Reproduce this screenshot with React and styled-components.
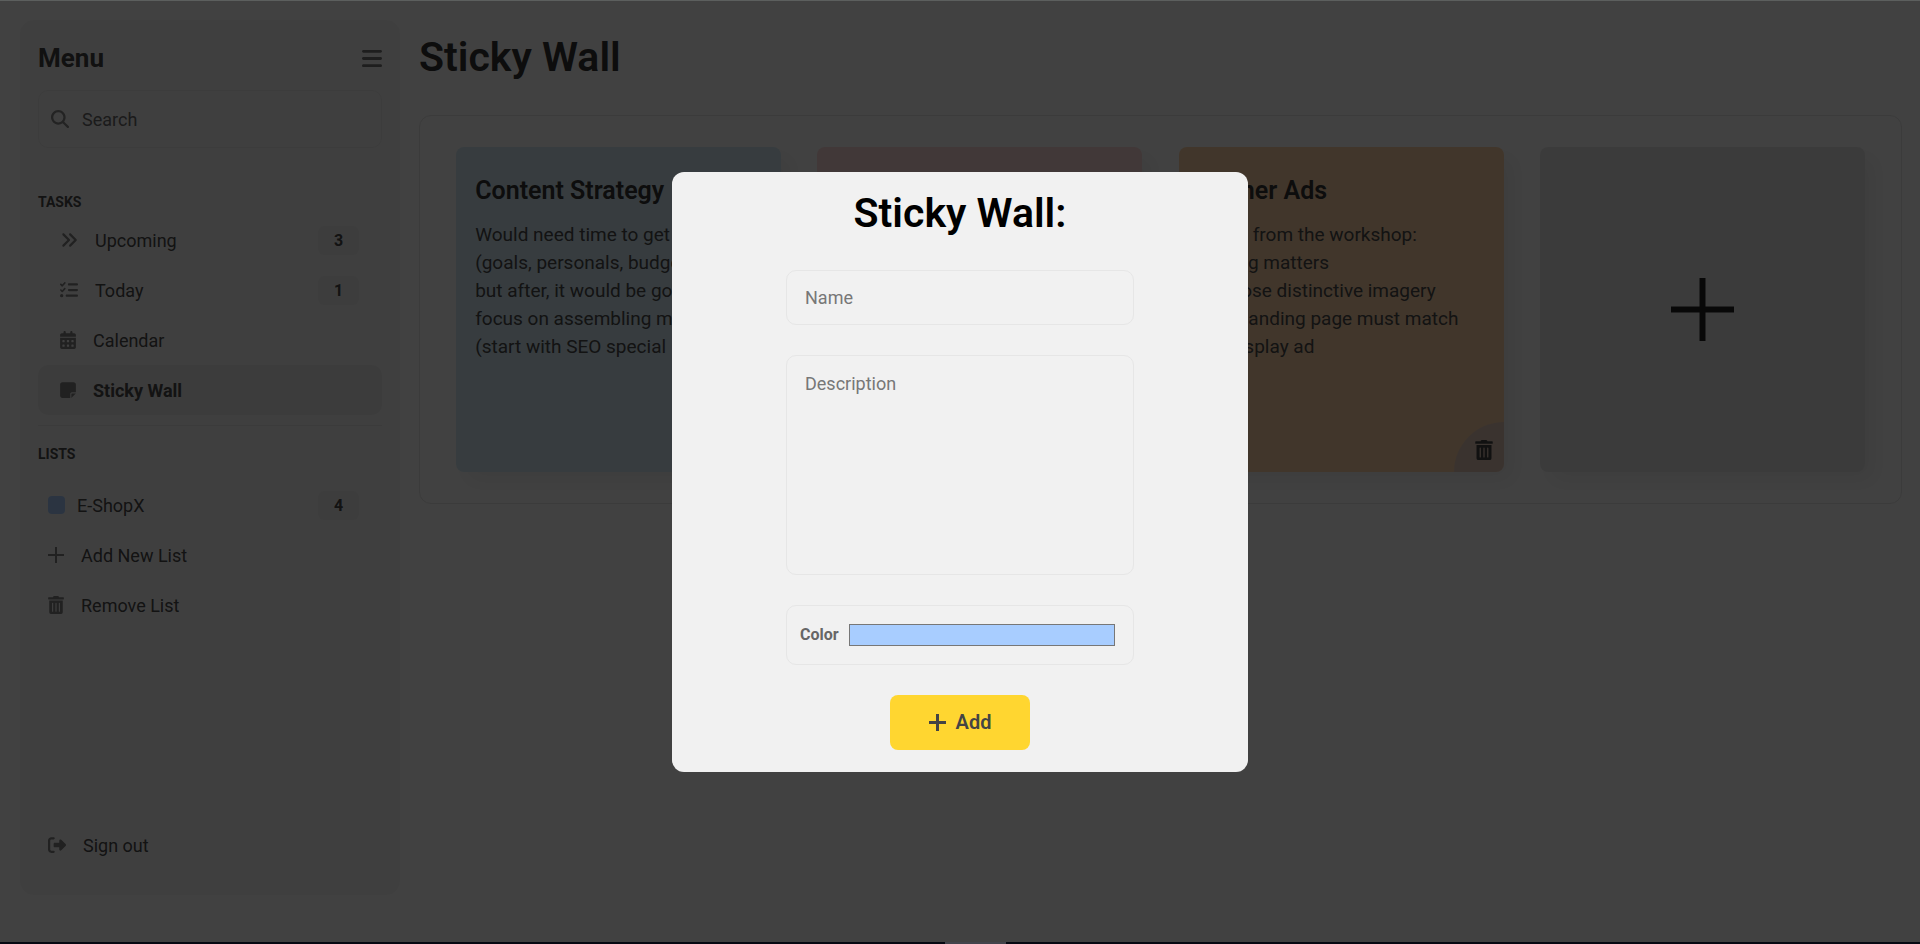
import React from 'react';
import styled, { createGlobalStyle } from 'styled-components';
import {
  FaAnglesRight,
  FaListCheck,
  FaCalendarDays,
  FaNoteSticky,
  FaMagnifyingGlass,
  FaRightFromBracket,
  FaBars,
} from 'react-icons/fa6';
import { FaTrashAlt } from 'react-icons/fa';

const GlobalStyle = createGlobalStyle`
  *, *::before, *::after { box-sizing: border-box; }
  body { margin: 0; background: #fff; }
  body, button, input, textarea { font-family: Roboto, "Liberation Sans", sans-serif; }
`;

const Frame = styled.div`
  min-height: 100vh;
  display: flex;
  flex-direction: column;
`;

const TopEdge = styled.div`
  height: 1px;
  background: #5c5f5e;
`;

const BottomEdge = styled.div`
  height: 2px;
  display: flex;
  justify-content: center;
  padding-left: 30px;
  background: #060912;
`;

const EdgeMark = styled.span`
  width: 61px;
  background: #43444c;
`;

const Stage = styled.div`
  position: relative;
  flex: 1;
  display: flex;
  gap: 19px;
  padding: 19px 18px 47px 20px;
`;

const Sidebar = styled.aside`
  flex: none;
  width: 380px;
  display: flex;
  flex-direction: column;
  padding: 21px 18px 25px;
  border-radius: 14px;
  background: #f8f8f8;
  color: #4a4a4a;
`;

const SideHead = styled.header`
  display: flex;
  align-items: center;
  justify-content: space-between;
  margin-bottom: 15px;
`;

const SideTitle = styled.h2`
  margin: 0;
  font-size: 26px;
  line-height: 34px;
  font-weight: 700;
  color: #444;
`;

const IconButton = styled.button`
  display: flex;
  padding: 0;
  border: 0;
  background: none;
  color: #777;
  svg {
    width: 20px;
    height: 23px;
  }
`;

const SearchBox = styled.label`
  display: flex;
  align-items: center;
  gap: 13px;
  height: 58px;
  padding: 0 12px;
  border: 1px solid #ebebeb;
  border-radius: 10px;
  color: #888;
`;

const SearchInput = styled.input`
  flex: 1;
  min-width: 0;
  padding: 0;
  border: 0;
  outline: 0;
  background: none;
  font-size: 18px;
  &::placeholder { color: #6a6a6a; opacity: 1; }
`;

const Caption = styled.h3`
  margin: ${(p) => (p.$first ? '41px 0 0' : '0 0 13px')};
  font-size: 14px;
  line-height: 26px;
  font-weight: 700;
`;

const Rule = styled.hr`
  width: 100%;
  margin: 10px 0 15px;
  border: 0;
  border-top: 1px solid #e6e6e6;
`;

const NavList = styled.ul`
  margin: 0;
  padding: 0;
  list-style: none;
`;

const NavLink = styled.a`
  display: flex;
  align-items: center;
  gap: ${(p) => (p.$tight ? '12px' : '17px')};
  height: 50px;
  padding: 0 23px 0 ${(p) => (p.$inset ? '22px' : '10px')};
  border-radius: 10px;
  background: ${(p) => (p.$active ? '#ebebeb' : 'none')};
  color: #4a4a4a;
  font-size: 18px;
  font-weight: ${(p) => (p.$active ? 700 : 400)};
  text-decoration: none;
  svg {
    flex: none;
    width: ${(p) => (p.$narrow ? '16px' : '18px')};
    height: 18px;
    color: #808080;
  }
`;

const NavText = styled.span`
  flex: 1;
`;

const Badge = styled.span`
  width: 41px;
  border-radius: 6px;
  background: #efefef;
  font-size: 16px;
  line-height: 29px;
  font-weight: 700;
  text-align: center;
`;

const Swatch = styled.span`
  width: 17px;
  height: 18px;
  border-radius: 4px;
  background: #a8cdff;
`;

const SignOut = styled.div`
  margin-top: auto;
`;

const Main = styled.main`
  flex: 1;
  min-width: 0;
`;

const PageTitle = styled.h1`
  margin: 10px 0 31px;
  font-size: 41px;
  line-height: 54px;
  font-weight: 600;
  color: #333;
`;

const Wall = styled.section`
  display: flex;
  flex-wrap: wrap;
  justify-content: space-evenly;
  gap: 30px 0;
  padding: 31px 0;
  border: 1px solid #e6e6e6;
  border-radius: 12px;
`;

const Note = styled.article`
  position: relative;
  width: 325px;
  height: 325px;
  padding: 29px 19px;
  overflow: hidden;
  border-radius: 8px;
  background: ${(p) => p.$color};
`;

const NoteShell = styled.div`
  border-radius: 8px;
  box-shadow: 10px 10px 20px rgba(0, 0, 0, 0.06);
`;

const NoteTitle = styled.h2`
  margin: 0 0 15px;
  font-size: 25px;
  line-height: 30px;
  font-weight: 600;
  color: #333;
`;

const NoteText = styled.p`
  margin: 0;
  font-size: 19px;
  line-height: 28px;
  white-space: pre;
  color: #4a4a4a;
`;

const DeleteNote = styled.button`
  position: absolute;
  right: 0;
  bottom: 0;
  width: 50px;
  height: 50px;
  display: flex;
  align-items: center;
  justify-content: center;
  padding: 6px 0 0 11px;
  border: 0;
  border-radius: 50px 0 0 0;
  background: rgba(180, 180, 210, 0.36);
  color: #444;
`;

const AddNote = styled.button`
  width: 325px;
  height: 325px;
  display: flex;
  align-items: center;
  justify-content: center;
  padding: 0;
  border: 0;
  border-radius: 8px;
  background: #e8e8e8;
  color: #222;
  box-shadow: 10px 10px 20px rgba(0, 0, 0, 0.06);
`;

const Overlay = styled.div`
  position: absolute;
  inset: 0;
  display: flex;
  align-items: center;
  justify-content: center;
  background: rgba(0, 0, 0, 0.745);
`;

const Dialog = styled.div`
  width: 30%;
  min-width: 400px;
  padding: 14px 20px 22px;
  border-radius: 12px;
  background: #f1f1f1;
`;

const DialogTitle = styled.h1`
  margin: 0 0 30px;
  font-size: 41px;
  line-height: 54px;
  font-weight: 600;
  text-align: center;
  color: #000;
`;

const Form = styled.form`
  display: flex;
  flex-direction: column;
  align-items: center;
  gap: 30px;
  width: 348px;
  margin: 0 auto;
`;

const NameField = styled.input`
  width: 100%;
  height: 55px;
  padding: 0 18px;
  border: 1px solid #e6e6e6;
  border-radius: 10px;
  outline: 0;
  background: none;
  font-size: 18px;
  &::placeholder { color: #777; opacity: 1; }
`;

const DescriptionField = styled.textarea`
  display: block;
  width: 100%;
  height: 220px;
  padding: 18px;
  border: 1px solid #e6e6e6;
  border-radius: 10px;
  outline: 0;
  background: none;
  font-size: 18px;
  line-height: 20px;
  resize: none;
  &::placeholder { color: #777; opacity: 1; }
`;

const ColorField = styled.div`
  display: flex;
  align-items: center;
  gap: 10px;
  width: 100%;
  height: 60px;
  padding: 0 18px 0 13px;
  border: 1px solid #e6e6e6;
  border-radius: 10px;
`;

const ColorLabel = styled.label`
  font-size: 16px;
  font-weight: 700;
  color: #666;
`;

const ColorInput = styled.input`
  flex: 1;
  min-width: 0;
  height: 22px;
  padding: 0;
  border: 0;
  background: none;
  appearance: none;
  &::-webkit-color-swatch-wrapper { padding: 0; }
  &::-webkit-color-swatch { border: 1px solid #777; border-radius: 0; }
`;

const AddButton = styled.button`
  display: flex;
  align-items: center;
  justify-content: center;
  gap: 10px;
  width: 140px;
  height: 55px;
  padding: 0;
  border: 0;
  border-radius: 8px;
  background: #ffd630;
  color: #444;
  font-size: 20px;
  font-weight: 600;
`;

function PlusIcon({ size, stroke }) {
  const c = size / 2;
  return (
    <svg width={size} height={size} viewBox={`0 0 ${size} ${size}`} aria-hidden="true">
      <path d={`M${c} 0V${size}M0 ${c}H${size}`} stroke="currentColor" strokeWidth={stroke} fill="none" />
    </svg>
  );
}

const tasks = [
  { label: 'Upcoming', Icon: FaAnglesRight, count: 3 },
  { label: 'Today', Icon: FaListCheck, count: 1 },
  { label: 'Calendar', Icon: FaCalendarDays, narrow: true },
  { label: 'Sticky Wall', Icon: FaNoteSticky, narrow: true, active: true },
];

const notes = [
  {
    color: '#d6ecf7',
    title: 'Content Strategy',
    text: 'Would need time to get\n(goals, personals, budget)\nbut after, it would be good\nfocus on assembling my\n(start with SEO special',
  },
  { color: '#ffdada' },
  {
    color: '#ffd4a9',
    title: 'Banner Ads',
    text: 'Notes from the workshop:\n- Sizing matters\n- Choose distinctive imagery\n- The landing page must match\nthe display ad',
  },
];

export default function App() {
  return (
    <Frame>
      <GlobalStyle />
      <TopEdge />
      <Stage>
        <Sidebar>
          <SideHead>
            <SideTitle>Menu</SideTitle>
            <IconButton type="button" aria-label="Toggle menu">
              <FaBars />
            </IconButton>
          </SideHead>
          <SearchBox>
            <FaMagnifyingGlass size={18} />
            <SearchInput type="search" placeholder="Search" aria-label="Search" />
          </SearchBox>

          <Caption $first>TASKS</Caption>
          <NavList>
            {tasks.map(({ label, Icon, count, active, narrow }) => (
              <li key={label}>
                <NavLink href="#" $inset $active={active} $narrow={narrow}>
                  <Icon />
                  <NavText>{label}</NavText>
                  {count && <Badge>{count}</Badge>}
                </NavLink>
              </li>
            ))}
          </NavList>

          <Rule />

          <Caption>LISTS</Caption>
          <NavList>
            <li>
              <NavLink href="#" $tight>
                <Swatch />
                <NavText>E-ShopX</NavText>
                <Badge>4</Badge>
              </NavLink>
            </li>
            <li>
              <NavLink href="#" $narrow>
                <PlusIcon size={16} stroke={2} />
                <NavText>Add New List</NavText>
              </NavLink>
            </li>
            <li>
              <NavLink href="#" $narrow>
                <FaTrashAlt />
                <NavText>Remove List</NavText>
              </NavLink>
            </li>
          </NavList>

          <SignOut>
            <NavLink href="#">
              <FaRightFromBracket />
              <NavText>Sign out</NavText>
            </NavLink>
          </SignOut>
        </Sidebar>

        <Main>
          <PageTitle>Sticky Wall</PageTitle>
          <Wall>
            {notes.map((note) => (
              <NoteShell key={note.color}>
                <Note $color={note.color}>
                  {note.title && <NoteTitle>{note.title}</NoteTitle>}
                  {note.text && <NoteText>{note.text}</NoteText>}
                  <DeleteNote type="button" aria-label="Delete note">
                    <FaTrashAlt size={20} />
                  </DeleteNote>
                </Note>
              </NoteShell>
            ))}
            <AddNote type="button" aria-label="Add note">
              <PlusIcon size={63} stroke={6} />
            </AddNote>
          </Wall>
        </Main>

        <Overlay>
          <Dialog role="dialog" aria-modal="true" aria-labelledby="dialog-title">
            <DialogTitle id="dialog-title">Sticky Wall:</DialogTitle>
            <Form onSubmit={(e) => e.preventDefault()}>
              <NameField type="text" placeholder="Name" aria-label="Name" />
              <DescriptionField placeholder="Description" aria-label="Description" />
              <ColorField>
                <ColorLabel htmlFor="note-color">Color</ColorLabel>
                <ColorInput id="note-color" type="color" defaultValue="#a8cdff" />
              </ColorField>
              <AddButton type="submit">
                <PlusIcon size={17} stroke={3} />
                Add
              </AddButton>
            </Form>
          </Dialog>
        </Overlay>
      </Stage>
      <BottomEdge>
        <EdgeMark />
      </BottomEdge>
    </Frame>
  );
}
